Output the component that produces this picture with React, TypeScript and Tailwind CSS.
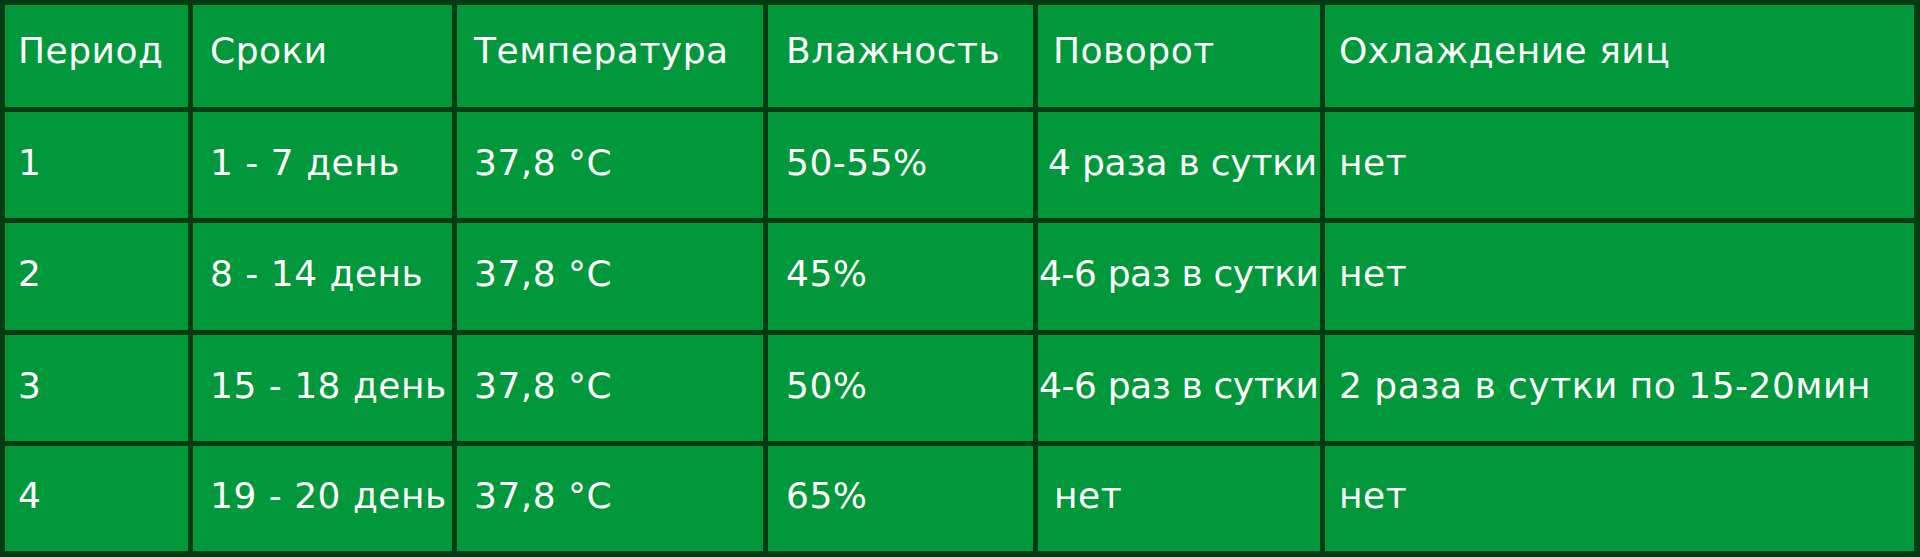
import React from "react";

type Cell = { text: string; pl: string; extra?: string };

const header: Cell[] = [
  { text: "Период", pl: "pl-[13px]" },
  { text: "Сроки", pl: "pl-[17px]" },
  { text: "Температура", pl: "pl-[17px]" },
  { text: "Влажность", pl: "pl-[18px]" },
  { text: "Поворот", pl: "pl-[15px]" },
  { text: "Охлаждение яиц", pl: "pl-[14px]" },
];

const rows: Cell[][] = [
  [
    { text: "1", pl: "pl-[13px]" },
    { text: "1 - 7 день", pl: "pl-[17px]" },
    { text: "37,8 °C", pl: "pl-[17px]" },
    { text: "50-55%", pl: "pl-[18px]" },
    { text: "4 раза в сутки", pl: "pl-[10px]", extra: "tracking-[-0.2px]" },
    { text: "нет", pl: "pl-[14px]" },
  ],
  [
    { text: "2", pl: "pl-[13px]" },
    { text: "8 - 14 день", pl: "pl-[17px]" },
    { text: "37,8 °C", pl: "pl-[17px]" },
    { text: "45%", pl: "pl-[18px]" },
    { text: "4-6 раз в сутки", pl: "pl-[1px]", extra: "tracking-[-0.4px]" },
    { text: "нет", pl: "pl-[14px]" },
  ],
  [
    { text: "3", pl: "pl-[13px]" },
    { text: "15 - 18 день", pl: "pl-[17px]" },
    { text: "37,8 °C", pl: "pl-[17px]" },
    { text: "50%", pl: "pl-[18px]" },
    { text: "4-6 раз в сутки", pl: "pl-[1px]", extra: "tracking-[-0.4px]" },
    { text: "2 раза в сутки по 15-20мин", pl: "pl-[14px]" },
  ],
  [
    { text: "4", pl: "pl-[13px]" },
    { text: "19 - 20 день", pl: "pl-[17px]" },
    { text: "37,8 °C", pl: "pl-[17px]" },
    { text: "65%", pl: "pl-[18px]" },
    { text: "нет", pl: "pl-[16px]" },
    { text: "нет", pl: "pl-[14px]" },
  ],
];

function Row({ cells, pb }: { cells: Cell[]; pb: string }) {
  return (
    <>
      {cells.map((c, i) => (
        <div
          key={i}
          className={`bg-[#00983a] flex items-center whitespace-nowrap ${c.pl} ${pb}`}
        >
          <span className={c.extra ?? "tracking-[0.5px]"}>{c.text}</span>
        </div>
      ))}
    </>
  );
}

export default function App() {
  return (
    <div
      className="w-[1920px] h-[557px] bg-[#013c12] pt-[5px] pl-[5px] pr-[6px] pb-[6px] grid gap-[5px] grid-cols-[183px_259px_306px_265px_282px_589px] grid-rows-[102px_106px_107px_106px_105px] text-white text-[36px] leading-none"
      style={{ fontFamily: '"DejaVu Sans", "Noto Sans", sans-serif' }}
    >
      <Row cells={header} pb="pb-[10px]" />
      {rows.map((r, i) => (
        <Row key={i} cells={r} pb="pb-[5px]" />
      ))}
    </div>
  );
}
